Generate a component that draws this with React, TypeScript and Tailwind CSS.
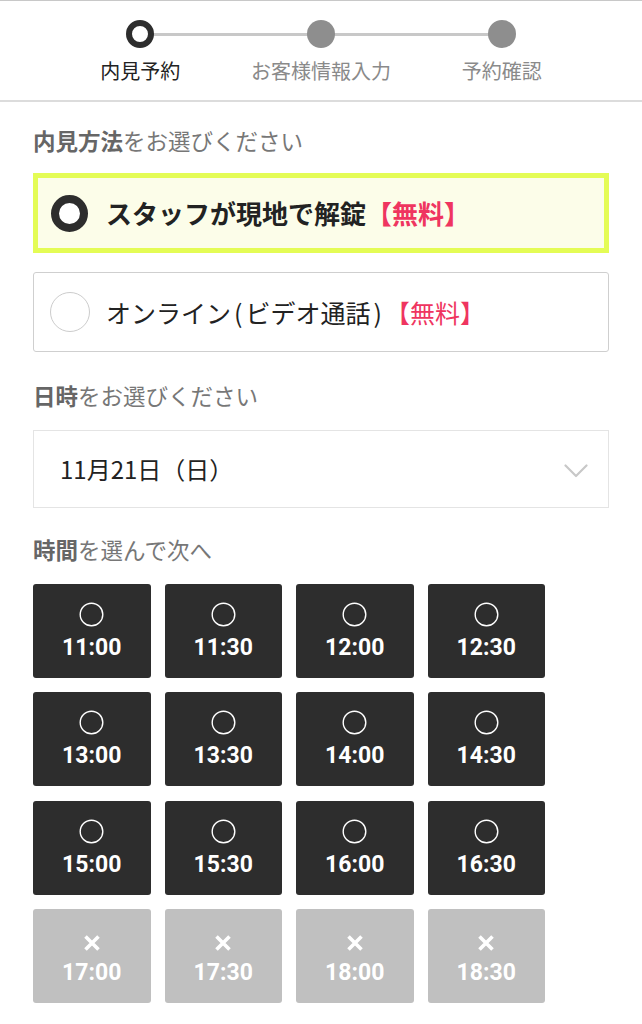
import React from "react";

const font = { fontFamily: '"Noto Sans CJK JP", "Noto Sans", Roboto, sans-serif' };

const times: { t: string; ok: boolean }[] = [
  { t: "11:00", ok: true },
  { t: "11:30", ok: true },
  { t: "12:00", ok: true },
  { t: "12:30", ok: true },
  { t: "13:00", ok: true },
  { t: "13:30", ok: true },
  { t: "14:00", ok: true },
  { t: "14:30", ok: true },
  { t: "15:00", ok: true },
  { t: "15:30", ok: true },
  { t: "16:00", ok: true },
  { t: "16:30", ok: true },
  { t: "17:00", ok: false },
  { t: "17:30", ok: false },
  { t: "18:00", ok: false },
  { t: "18:30", ok: false },
];

export default function App() {
  return (
    <div className="w-[642px] min-h-[1024px] bg-white border-t border-[#c8c8c8]" style={font}>
      {/* Stepper */}
      <div className="border-b-2 border-[#dcdcdc]">
        <div className="relative mx-[50px] grid grid-cols-3 pt-[19px] pb-[15px]">
          <div className="absolute left-[90px] right-[90px] top-[32px] h-[3px] bg-[#c8c8c8]" />
          <div className="relative flex flex-col items-center">
            <div className="w-[28px] h-[28px] rounded-full border-[6px] border-[#2d2d2d] bg-white" />
            <div className="mt-[9px] text-[20px] leading-[28px] text-[#222]">内見予約</div>
          </div>
          <div className="relative flex flex-col items-center">
            <div className="w-[28px] h-[28px] rounded-full bg-[#8e8e8e]" />
            <div className="mt-[9px] text-[20px] leading-[28px] text-[#8a8a8a]">お客様情報入力</div>
          </div>
          <div className="relative flex flex-col items-center">
            <div className="w-[28px] h-[28px] rounded-full bg-[#8e8e8e]" />
            <div className="mt-[9px] text-[20px] leading-[28px] text-[#8a8a8a]">予約確認</div>
          </div>
        </div>
      </div>

      <div className="px-[33px]">
        {/* 内見方法 */}
        <div className="mt-[23px] text-[22.5px] leading-[30px] text-[#777]">
          <span className="font-bold text-[#666]">内見方法</span>をお選びください
        </div>

        <div className="mt-[18px] h-[80px] border-[5px] border-[#e4fc55] bg-[#fcfde9] flex items-center pl-[13px]">
          <div className="w-[37px] h-[37px] rounded-full border-[8px] border-[#2d2d2d] bg-white shrink-0" />
          <div className="ml-[18px] text-[26px] font-bold text-[#222] leading-none">
            スタッフが現地で解錠<span className="text-[#ef3560]">【無料】</span>
          </div>
        </div>

        <div className="mt-[19px] h-[80px] border border-[#cfcfcf] rounded-[3px] bg-white flex items-center pl-[16px]">
          <div className="w-[40px] h-[40px] rounded-full border-[1.5px] border-[#cccccc] bg-white shrink-0" />
          <div className="ml-[16px] text-[25px] text-[#222] leading-none">
            オンライン<span className="mx-[3px]">(</span>ビデオ通話<span className="mx-[3px]">)</span>
            <span className="text-[#ef3560]">【無料】</span>
          </div>
        </div>

        {/* 日時 */}
        <div className="mt-[28px] text-[22.5px] leading-[30px] text-[#777]">
          <span className="font-bold text-[#666]">日時</span>をお選びください
        </div>

        <div className="mt-[20px] h-[78px] border border-[#e4e4e4] flex items-center justify-between pl-[26px] pr-[20px]">
          <div className="text-[24px] text-[#222] leading-none">11月21日（日）</div>
          <svg width="24" height="14" viewBox="0 0 24 14" fill="none" className="mt-[4px]">
            <path d="M1.5 1.5 L12 12 L22.5 1.5" stroke="#c8c8c8" strokeWidth="2.2" strokeLinecap="round" strokeLinejoin="round" />
          </svg>
        </div>

        {/* 時間 */}
        <div className="mt-[26px] text-[22.5px] leading-[30px] text-[#777]">
          <span className="font-bold text-[#666]">時間</span>を選んで次へ
        </div>

        <div className="mt-[20px] w-[512px] grid grid-cols-4 gap-x-[14px] gap-y-[14.3px]">
          {times.map((x) =>
            x.ok ? (
              <div
                key={x.t}
                className="h-[94px] rounded-[3px] bg-[#2d2d2d] flex flex-col items-center pt-[18px]"
              >
                <svg width="25" height="25" viewBox="0 0 25 25" fill="none">
                  <circle cx="12.5" cy="12.5" r="11.3" stroke="#ffffff" strokeWidth="1.4" />
                </svg>
                <div className="mt-[7px] text-[23px] leading-[28px] font-bold text-white" style={{ fontFamily: 'Roboto, "Noto Sans", sans-serif' }}>
                  {x.t}
                </div>
              </div>
            ) : (
              <div
                key={x.t}
                className="h-[94px] rounded-[3px] bg-[#c0c0c0] flex flex-col items-center pt-[26px]"
              >
                <svg width="16" height="16" viewBox="0 0 16 16" fill="none">
                  <path d="M1.5 1.5 L14.5 14.5 M14.5 1.5 L1.5 14.5" stroke="#ffffff" strokeWidth="3.6" strokeLinecap="butt" />
                </svg>
                <div className="mt-[8px] text-[23px] leading-[28px] font-bold text-white" style={{ fontFamily: 'Roboto, "Noto Sans", sans-serif' }}>
                  {x.t}
                </div>
              </div>
            )
          )}
        </div>
      </div>
    </div>
  );
}
